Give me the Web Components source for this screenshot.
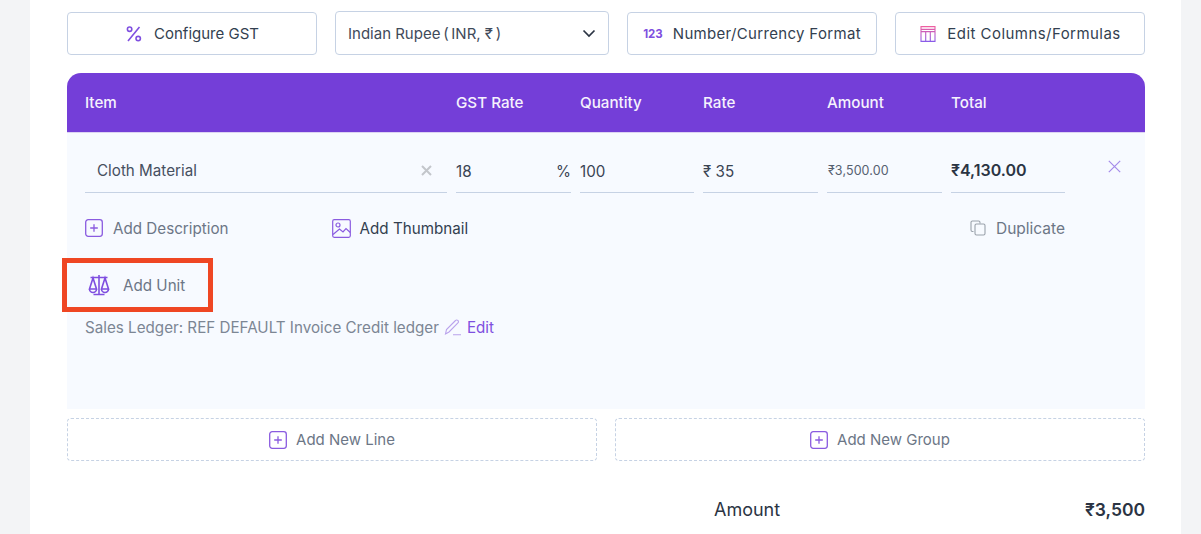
<!DOCTYPE html>
<html>
<head>
<meta charset="utf-8">
<style>
html, body { margin: 0; padding: 0; height: 534px; overflow: hidden; }
body { background: #f3f4f6; font-family: Inter, "Noto Sans", sans-serif; color: #2f3a4c; }
</style>
</head>
<body>

<invoice-card>
  <div class="toolbar" slot="toolbar">
    <tool-button style="gap:11px"><svg slot="icon" width="18" height="18" viewBox="0 0 18 18" fill="none" stroke="#7f4fe0" stroke-width="1.6"><path d="M14.5 2 3 16"/><circle cx="4.6" cy="4.2" r="2.2"/><circle cx="13.2" cy="13.6" r="2.2"/></svg>Configure GST</tool-button>
    <currency-select>Indian Rupee&#8201;(&#8201;INR, ₹&#8201;)</currency-select>
    <tool-button style="letter-spacing:.32px"><span slot="icon" class="num">123</span>Number/Currency Format</tool-button>
    <tool-button style="letter-spacing:.45px"><svg slot="icon" width="18" height="18" viewBox="0 0 18 18" fill="none" stroke-width="1.1"><defs><linearGradient id="g" x1="0" y1="0" x2="0" y2="1"><stop offset="0" stop-color="#ee5fa0"/><stop offset="1" stop-color="#8a5be8"/></linearGradient></defs><path stroke="url(#g)" d="M2 1.6h14v14.8H2zM2 4.4h14M2 6.6h14M6.7 6.6v9.8M11.3 6.6v9.8"/></svg>Edit Columns/Formulas</tool-button>
  </div>
  <line-table slot="table"></line-table>
  <add-button slot="add-line">Add New Line</add-button>
  <add-button slot="add-group">Add New Group</add-button>
  <amount-row slot="summary" label="Amount" value="₹3,500"></amount-row>
</invoice-card>

<script>
const PLUS_ICON = `<svg width="18" height="18" viewBox="0 0 18 18" fill="none" stroke="#8a5be0" stroke-width="1.3"><rect x=".7" y=".7" width="16.6" height="16.6" rx="2.5"/><path d="M9 5.2v7.6M5.2 9h7.6"/></svg>`;

class InvoiceCard extends HTMLElement {
  constructor() {
    super();
    this.attachShadow({mode: 'open'}).innerHTML = `
    <style>
    :host { display: block; margin-left: 30px; width: 1151px; height: 534px; background: #fff; box-sizing: border-box; padding: 12px 36px 0 37px; overflow: hidden; }
    ::slotted(.toolbar) { display: flex; gap: 18px; height: 43px; margin-bottom: 18px; }
    .adds { display: flex; gap: 18px; margin-top: 9px; }
    .adds ::slotted(*) { flex: 1 1 0; }
    </style>
    <slot name="toolbar"></slot>
    <slot name="table"></slot>
    <div class="adds"><slot name="add-line"></slot><slot name="add-group"></slot></div>
    <slot name="summary"></slot>`;
  }
}

class ToolButton extends HTMLElement {
  constructor() {
    super();
    this.attachShadow({mode: 'open'}).innerHTML = `
    <style>
    :host { flex: 1 1 0; min-width: 0; display: flex; align-items: center; justify-content: center; gap: 10px; box-sizing: border-box; border: 1px solid #c6d2e4; border-radius: 4px; background: #fff; font-size: 15px; color: #333f50; white-space: nowrap; }
    ::slotted(.num) { font-size: 11.5px; font-weight: 700; color: #7f4fe0; letter-spacing: 0; }
    </style>
    <slot name="icon"></slot><slot></slot>`;
  }
}

class CurrencySelect extends HTMLElement {
  constructor() {
    super();
    this.attachShadow({mode: 'open'}).innerHTML = `
    <style>
    :host { flex: 1 1 0; min-width: 0; margin-top: -1px; display: flex; align-items: center; justify-content: space-between; box-sizing: border-box; border: 1px solid #c6d2e4; border-radius: 4px; background: #fff; padding: 0 12px; font-size: 15px; color: #3f4a5a; }
    svg { display: block; }
    </style>
    <span><slot></slot></span>
    <svg width="14" height="9" viewBox="0 0 14 9" fill="none" stroke="#2b3443" stroke-width="1.7"><path d="M1.5 1.5 7 7l5.5-5.5"/></svg>`;
  }
}

class LineTable extends HTMLElement {
  constructor() {
    super();
    this.attachShadow({mode: 'open'}).innerHTML = `
    <style>
    :host { display: block; }
    .grid { display: grid; grid-template-columns: 362px 115px 114px 115px 115px 114px; column-gap: 9px; }
    .head { height: 60px; box-sizing: border-box; background: #743ed8; border-radius: 14px 14px 0 0; border-bottom: 1px solid #dcd3f3; padding: 0 18px; align-items: center; color: #f6f2fd; font-size: 15.2px; font-weight: 500; }
    .body { background: #f7faff; height: 276px; padding: 0 18px; box-sizing: border-box; position: relative; }
    .fields { padding-top: 18px; }
    .f { height: 42px; box-sizing: border-box; border-bottom: 1px solid #c6d2e4; display: flex; align-items: center; justify-content: space-between; font-size: 15.2px; color: #3a4453; padding-bottom: 1px; }
    .f.item { padding: 0 14px 3px 12px; color: #47505f; }
    .f.amt { font-size: 12.5px; letter-spacing: .1px; color: #566070; padding: 0 0 3px 1px; }
    .f.tot { font-size: 16px; font-weight: 600; color: #2b3443; padding-bottom: 3px; }
    .close { position: absolute; left: 1041px; top: 27px; display: block; }
    .actions { display: flex; height: 18px; margin-top: 26px; font-size: 15.2px; color: #6c7686; align-items: center; }
    .act { display: flex; align-items: center; gap: 10px; }
    .thumb { margin-left: 103px; gap: 9px; color: #333f50; }
    .dup { margin-left: auto; margin-right: 62px; font-size: 15.5px; }
    svg { display: block; flex: none; }
    .unit { display: flex; align-items: center; gap: 12px; box-sizing: border-box; width: 151px; height: 54px; margin: 21px 0 0 -23px; padding-left: 20px; border: 5px solid #ef4623; color: #6c7686; font-size: 15.2px; }
    .ledger { display: flex; align-items: center; margin-top: 6px; height: 18px; font-size: 15.2px; color: #7c8694; }
    .ledger svg { margin: 0 5px; }
    .ledger b { font-weight: 400; color: #7f4fe0; }
    </style>
    <div class="grid head">
      <span>Item</span><span>GST Rate</span><span>Quantity</span><span>Rate</span><span>Amount</span><span>Total</span>
    </div>
    <div class="body">
      <div class="grid fields">
        <div class="f item">Cloth Material <svg width="13" height="13" viewBox="0 0 13 13" stroke="#c3c6cb" stroke-width="2"><path d="m2 2 9 9M11 2l-9 9"/></svg></div>
        <div class="f">18<span>%</span></div>
        <div class="f">100</div>
        <div class="f">₹ 35</div>
        <div class="f amt">₹3,500.00</div>
        <div class="f tot">₹4,130.00</div>
      </div>
      <svg class="close" width="13" height="13" viewBox="0 0 13 13" stroke="#a58bea" stroke-width="1.2"><path d="m.8.8 11.4 11.4M12.2.8.8 12.2"/></svg>
      <div class="actions">
        <div class="act">${PLUS_ICON}Add Description</div>
        <div class="act thumb"><svg width="19" height="19" viewBox="0 0 19 19" fill="none" stroke="#8a5be0" stroke-width="1.2"><rect x=".7" y=".7" width="17.6" height="17.6" rx="1.5"/><circle cx="6" cy="6" r="2"/><path d="M1 15.5 7.5 10l3.5 3 3-3.5 4.3 4"/></svg>Add Thumbnail</div>
        <div class="act dup"><svg width="16" height="16" viewBox="0 0 16 16" fill="none" stroke="#9aa1ab" stroke-width="1.1"><path d="M3.5 11.5H2.4a1.4 1.4 0 0 1-1.4-1.4V2.4A1.4 1.4 0 0 1 2.4 1h6.2A1.4 1.4 0 0 1 10 2.4v1"/><rect x="5" y="4" width="10" height="11" rx="1.5"/></svg>Duplicate</div>
      </div>
      <div class="unit"><svg width="24" height="24" viewBox="0 0 24 24" fill="none" stroke="#7f4fe0" stroke-width="1.6"><path d="M12 2v19M6.5 21.5h11M3.5 4.5h17M6 5l-3.5 11h7zM18 5l-3.5 11h7zM2.5 16a3.5 3.5 0 0 0 7 0M14.5 16a3.5 3.5 0 0 0 7 0"/></svg>Add Unit</div>
      <div class="ledger">Sales Ledger: REF DEFAULT Invoice Credit ledger<svg width="18" height="17" viewBox="0 0 18 17" fill="none" stroke="#b9a2ec" stroke-width="1.1"><path d="M1.5 15 2.5 10.5 11.5 1.5a1.6 1.6 0 0 1 2.4 0 1.6 1.6 0 0 1 0 2.4L5 13zM9 15.8h8"/></svg><b>Edit</b></div>
    </div>`;
  }
}

class AddButton extends HTMLElement {
  constructor() {
    super();
    this.attachShadow({mode: 'open'}).innerHTML = `
    <style>
    :host { display: flex; align-items: center; justify-content: center; gap: 9px; height: 43px; box-sizing: border-box; border: 1px dashed #c6d2e4; border-radius: 4px; font-size: 15px; color: #6c7686; }
    svg { display: block; }
    </style>
    ${PLUS_ICON}<slot></slot>`;
  }
}

class AmountRow extends HTMLElement {
  constructor() {
    super();
    this.attachShadow({mode: 'open'}).innerHTML = `
    <style>
    :host { display: flex; justify-content: space-between; margin: 38px 0 0 647px; font-size: 18px; color: #2b3443; line-height: 22px; }
    b { font-weight: 600; font-size: 17.5px; }
    </style>
    <span>${this.getAttribute('label')}</span><b>${this.getAttribute('value')}</b>`;
  }
}

customElements.define('invoice-card', InvoiceCard);
customElements.define('tool-button', ToolButton);
customElements.define('currency-select', CurrencySelect);
customElements.define('line-table', LineTable);
customElements.define('add-button', AddButton);
customElements.define('amount-row', AmountRow);
</script>
</body>
</html>
